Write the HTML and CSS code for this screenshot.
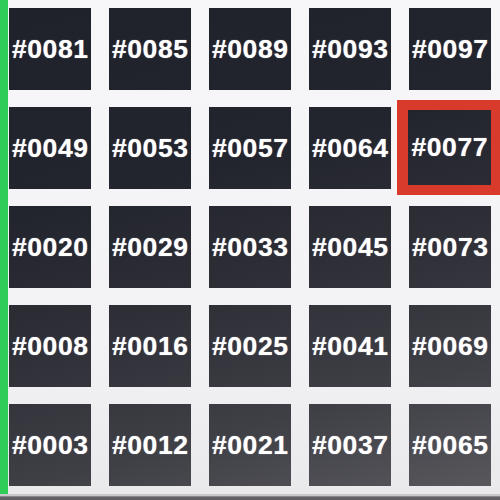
FILE: index.html
```html
<!DOCTYPE html>
<html>
<head>
<meta charset="utf-8">
<link rel="stylesheet" href="styles.css">
</head>
<body>
<div class="screen">
  <div class="accent"></div>
  <div class="grid">
    <div class="tile"><span>#0081</span></div>
    <div class="tile"><span>#0085</span></div>
    <div class="tile"><span>#0089</span></div>
    <div class="tile"><span>#0093</span></div>
    <div class="tile"><span>#0097</span></div>
    <div class="tile"><span>#0049</span></div>
    <div class="tile"><span>#0053</span></div>
    <div class="tile"><span>#0057</span></div>
    <div class="tile"><span>#0064</span></div>
    <div class="tile selected"><span>#0077</span></div>
    <div class="tile"><span>#0020</span></div>
    <div class="tile"><span>#0029</span></div>
    <div class="tile"><span>#0033</span></div>
    <div class="tile"><span>#0045</span></div>
    <div class="tile"><span>#0073</span></div>
    <div class="tile"><span>#0008</span></div>
    <div class="tile"><span>#0016</span></div>
    <div class="tile"><span>#0025</span></div>
    <div class="tile"><span>#0041</span></div>
    <div class="tile"><span>#0069</span></div>
    <div class="tile"><span>#0003</span></div>
    <div class="tile"><span>#0012</span></div>
    <div class="tile"><span>#0021</span></div>
    <div class="tile"><span>#0037</span></div>
    <div class="tile"><span>#0065</span></div>
  </div>
  <div class="bottom"></div>
</div>
</body>
</html>
```
FILE: styles.css
```css
html, body {
  margin: 0;
  padding: 0;
  width: 500px;
  height: 500px;
  overflow: hidden;
}
body {
  background: linear-gradient(180deg, #f7f7f9 0%, #f2f2f4 70%, #e9e9ec 100%);
  font-family: "Liberation Sans", Arial, sans-serif;
}
.screen {
  position: relative;
  width: 500px;
  height: 500px;
  display: flex;
}
.accent {
  width: 8px;
  height: 494px;
  background: #2fcc58;
  flex: none;
}
.grid {
  display: grid;
  grid-template-columns: repeat(5, 82px);
  grid-auto-rows: 82px;
  column-gap: 18px;
  row-gap: 17px;
  padding: 8px 0 0 1px;
}
.tile {
  background: linear-gradient(165deg, #20222b 0%, #23252e 35%, #2d2e36 55%, #3f4046 78%, #5a5a5f 100%);
  background-attachment: fixed;
  display: flex;
  align-items: center;
  justify-content: center;
  overflow: visible;
}
.tile span {
  color: #ffffff;
  font-weight: bold;
  font-size: 26.5px;
  letter-spacing: 0.6px;
  white-space: nowrap;
  margin-right: -0.6px;
  text-shadow: 0 0 1px rgba(255,255,255,0.7);
}
.tile.selected {
  margin: -7px -12px -6px -12px;
  border: 11px solid #d83b2c;
  border-top-width: 10px;
  border-bottom-width: 10px;
  border-right-width: 12px;
}
.bottom {
  position: absolute;
  left: 0;
  right: 0;
  bottom: 0;
  height: 6px;
  background: linear-gradient(180deg, #c9c9cd 0%, #c9c9cd 35%, #66666b 45%, #5e5e62 100%);
}
```
